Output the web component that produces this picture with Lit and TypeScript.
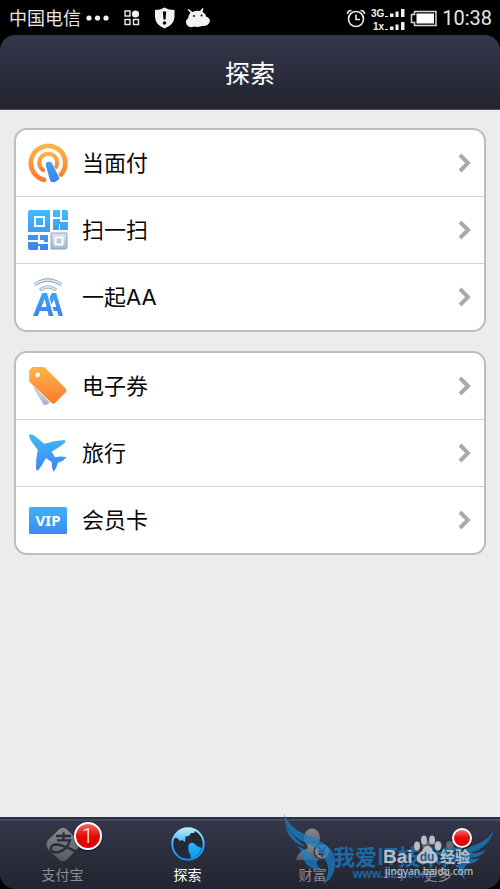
import { LitElement, html, css, svg } from "lit";
import { customElement, property } from "lit/decorators.js";

const CJK = css`"Noto Sans CJK SC", "Noto Sans", sans-serif`;

const gradients = svg`
  <linearGradient id="orange" x1="0" y1="0" x2="0" y2="1"><stop offset="0" stop-color="#ffb547"/><stop offset="1" stop-color="#f97a2e"/></linearGradient>
  <linearGradient id="blue" gradientUnits="userSpaceOnUse" x1="0" y1="0" x2="0" y2="40"><stop offset="0" stop-color="#3ebdf8"/><stop offset="1" stop-color="#3e82ee"/></linearGradient>
  <linearGradient id="steel" x1="0" y1="0" x2="0" y2="1"><stop offset="0" stop-color="#dce6f0"/><stop offset="1" stop-color="#a3b6cc"/></linearGradient>`;

const rowIcons: Record<string, unknown> = {
  touch: svg`
    <path d="M16 36.8A17.2 17.2 0 1 1 33 31.5" fill="none" stroke="url(#orange)" stroke-width="4.8" stroke-linecap="round"/>
    <path d="M15.2 27.2A9 9 0 1 1 28.2 23.8" fill="none" stroke="url(#orange)" stroke-width="4" stroke-linecap="round"/>
    <path d="M17.8 22.5Q17.4 19 21 18.8Q23.6 18.9 24.4 21L31.2 34.6Q31.4 37 28.2 38.4Q24.4 40 22.4 38.2Z" fill="url(#blue)" stroke="#fff" stroke-width="1" paint-order="stroke"/>`,
  scan: svg`
    <path fill="url(#blue)" fill-rule="evenodd" d="M2 0H22V22H0V2Q0 0 2 0ZM6 6V17H17V6Z"/>
    <path fill="url(#blue)" d="M8 8H15V15H8ZM25 0H32V7H25ZM34 0H38Q40 0 40 2V10H34ZM25 9H32V12H40V20H32V14H31V20H25ZM0 25H10V30H0ZM12 25H20V32H16V30H12ZM0 32H10V34H20V40H12V36H10V40H2Q0 40 0 38Z"/>
    <path d="M23 23H39V37Q39 39 37 39H23Z" fill="url(#steel)" stroke="#8ea2b8"/>
    <path d="M27.500 27.500H34.500V34.500H27.500Z" fill="#bac9d9" stroke="#fff" stroke-width="2"/>`,
  together: svg`
    <g fill="none" stroke-linecap="round">
      <path d="M8 7Q20 -1 32 7M13 12.4Q20 7.4 27 12.4" stroke="#8ea5be" stroke-width="3.2"/>
      <path d="M8 7Q20 -1 32 7M13 12.4Q20 7.4 27 12.4" stroke="#e4ecf3" stroke-width="1.7"/>
    </g>
    <path fill="url(#blue)" fill-rule="evenodd" d="M14.2 16H19L25.4 39H20.8L19.4 34H11.8L9.8 39H5ZM16.8 22L13.4 30H18.5Z"/>
    <path fill="url(#blue)" d="M23.6 16H28.2L35 39H30.6L29.2 34H25.8L24.6 30H28.2L26 22.500L23.4 27.500L21.6 21Z"/>`,
  tag: svg`
    <path d="M6 21.5L21.3 36.6Q19 39 16 38.6Z" fill="url(#steel)" stroke="#93a7be" stroke-width=".7"/>
    <path d="M4.5 1H15Q16.5 1 17.5 2L38 22.8Q39.4 24.4 38 26L27 37Q25.4 38.4 23.6 37L2.2 16.5Q1.2 15.5 1.2 14V4.5Z" fill="url(#orange)"/>
    <circle cx="9.7" cy="8.7" r="2.8" fill="#fff" stroke="#e98b32" stroke-width=".7"/>`,
  plane: svg`
    <path fill="url(#blue)" d="M1.3 1.3Q4 .8 6.5 2.8L16.2 10.8Q26 7.5 36.4 7L37.6 9Q31 15 23.6 18.7L27 24.2Q33 22.8 38.8 24.3Q35 28.4 29.8 29.8Q29 34.8 25.4 38.8Q23.4 34.2 23.8 29.2L18 25Q14.5 32 9.8 37.7L8 36.2Q7.6 26 9.8 17L2.6 7.2Q1 4 1.3 1.3Z"/>`,
  vip: svg`
    <rect x="1" y="7" width="38" height="27" rx="1.5" fill="url(#blue)"/>
    <text x="20" y="26" text-anchor="middle" fill="#fff" font-family="Noto Sans, sans-serif" font-weight="700" font-size="15">VIP</text>`,
};

const tabIcons: Record<string, unknown> = {
  alipay: svg`
    <path d="M13 2.5Q17 -1 21 2.5L32 13Q35 17 32 21L21 32.5Q17 36 13 32.5L2 22Q-1 17 2 13Z" fill="url(#dim)"/>
    <path d="M10 9H25M17.5 5.5V13M11 13.4H24Q21 23 13 25Q6 26.5 4.8 22Q4.6 17.5 11 17.5Q18 18.5 31 25" fill="none" stroke="#2b2d3a" stroke-width="2.4"/>`,
  globe: svg`
    <circle cx="17" cy="17" r="15.7" fill="#252936" stroke="url(#sky)" stroke-width="2"/>
    <path fill="url(#sky)" d="M3 11Q8 1 18 1.4Q22 1.6 24 4L23 6L20 6L18 9L14.5 9.500L14 15L11 13L9 14L6 11Z"/>
    <path fill="url(#sky)" d="M17.5 18Q19 15 23 16.2L26 19L30.6 21Q28.5 28.5 21 31.8Q18.5 30.6 19.5 27.5Q16.5 25 17.5 18Z"/>`,
  wealth: svg`
    <ellipse cx="16" cy="11" rx="8" ry="9.5" fill="url(#dim)"/>
    <path d="M11.5 17H20.5V21Q29 23 31 33H0Q1 25 11.5 21.5Z" fill="url(#dim)"/>
    <circle cx="26" cy="24.5" r="8.500" fill="#303443"/><circle cx="26" cy="24.5" r="7" fill="#858790"/>
    <path d="M22.5 20L26 24L29.5 20M26 24V30M22.5 24.5H29.5M22.5 27.2H29.5" fill="none" stroke="#2b2e3a" stroke-width="1.7"/>`,
  more: svg`
    <circle cx="5" cy="18" r="4" fill="#656873"/><circle cx="17" cy="18" r="4" fill="#656873"/><circle cx="29" cy="18" r="4" fill="#656873"/>`,
};

@customElement("menu-row")
class MenuRow extends LitElement {
  @property() icon = "";
  @property() label = "";
  static styles = css`
    :host { display: block; }
    .row { display: flex; align-items: center; box-sizing: border-box; width: 100%; height: 66px; padding: 0 13px 0 12px; border: 0; background: none; color: #080808; font: 22px/32px Inter, ${CJK}; text-align: left; }
    .icon { width: 40px; height: 40px; margin-right: 14px; flex: none; }
    .label { flex: 1; }
    .chevron { width: 13px; height: 20px; flex: none; }
  `;
  render() {
    return html`<button class="row">
      <svg class="icon" viewBox="0 0 40 40" aria-hidden="true"><defs>${gradients}</defs>${rowIcons[this.icon]}</svg>
      <span class="label">${this.label}</span>
      <svg class="chevron" viewBox="0 0 13 20" aria-hidden="true"><path d="M2 2L10 10L2 18" fill="none" stroke="#a9aaac" stroke-width="4"/></svg>
    </button>`;
  }
}

@customElement("tab-item")
class TabItem extends LitElement {
  @property() icon = "";
  @property() label = "";
  @property() badge = "";
  @property({ type: Boolean }) dot = false;
  @property({ type: Boolean }) active = false;
  static styles = css`
    :host { display: block; flex: 1; }
    .tab { position: relative; display: flex; flex-direction: column; align-items: center; width: 100%; padding: 8px 0 4px; border: 0; background: none; color: #8b8c93; font: 14px/20px ${CJK}; }
    .active { color: #fff; }
    .icon { width: 34px; height: 36px; margin-bottom: 1px; }
    .badge { position: absolute; box-sizing: border-box; border: 2px solid #fff; border-radius: 50%; background: linear-gradient(#f46a68, #e80808 50%, #df0000); color: #fff; box-shadow: 0 1px 2px #0008; }
    .count { left: calc(50% + 11px); top: 9px; width: 28px; height: 28px; margin-top: -6px; font: 300 20px/24px Roboto, sans-serif; text-align: center; }
    .dot { left: calc(50% + 14px); top: 9px; width: 20px; height: 20px; }
  `;
  render() {
    return html`<button class="tab ${this.active ? "active" : ""}">
      <svg class="icon" viewBox="0 0 34 36" aria-hidden="true">
        <defs>
          <linearGradient id="dim" x1="0" y1="0" x2="0" y2="1"><stop offset="0" stop-color="#898a90"/><stop offset="1" stop-color="#565863"/></linearGradient>
          <linearGradient id="sky" gradientUnits="userSpaceOnUse" x1="0" y1="0" x2="0" y2="34"><stop offset="0" stop-color="#c8f0ff"/><stop offset=".55" stop-color="#22aef8"/><stop offset="1" stop-color="#0a91ed"/></linearGradient>
        </defs>${tabIcons[this.icon]}</svg>
      <span>${this.label}</span>
      ${this.badge ? html`<span class="badge count">${this.badge}</span>` : ""}
      ${this.dot ? html`<span class="badge dot"></span>` : ""}
    </button>`;
  }
}

@customElement("app-root")
class AppRoot extends LitElement {
  static styles = css`
    :host { display: flex; flex-direction: column; min-height: 100vh; background: #000; font-family: ${CJK}; }
    .status { display: flex; align-items: center; height: 35px; padding: 0 8px 0 9px; color: #e6e6e6; font-size: 18px; line-height: 32px; }
    .carrier { padding-bottom: 2px; }
    .notices { width: 126px; height: 24px; margin-left: 4px; }
    .signals { width: 94px; height: 28px; margin-left: auto; }
    .time { margin-left: 3px; font: 20px/36px Roboto, sans-serif; }
    .title { box-sizing: border-box; height: 75px; margin: 0; border-bottom: 1px solid #55565d; border-radius: 15px 15px 0 0; background: linear-gradient(#34374b, #23242f); color: #fff; font-size: 25px; font-weight: 400; line-height: 75px; text-align: center; }
    .content { flex: 1; display: flex; flex-direction: column; gap: 19px; padding: 18px 14px; background: #ebecee; }
    .card { border: 2px solid #bcbdc0; border-radius: 13px; background: #fff; overflow: hidden; }
    .card menu-row + menu-row { border-top: 1px solid #d4d5d7; }
    .tabs { position: relative; display: flex; box-sizing: border-box; height: 72px; border-top: 2px solid #2a313c; box-shadow: inset 0 2px #454a60; background: linear-gradient(#34374b, #23242f); border-radius: 0 0 15px 15px; }
    .bottom { background: #000; }
    .marks { position: absolute; right: 0; bottom: 0; width: 225px; height: 84px; pointer-events: none; }
  `;
  render() {
    return html`
      <div class="status">
        <span class="carrier">中国电信</span>
        <svg class="notices" viewBox="0 0 126 24" aria-hidden="true">
          <g fill="#f2f2f2">
            <circle cx="4" cy="12" r="2.6"/><circle cx="12.5" cy="12" r="2.6"/><circle cx="21" cy="12" r="2.6"/>
            <circle cx="50.5" cy="8" r="3.6"/>
            <path d="M70 4Q75.5 4 79.5 1.5Q83.5 4 89.5 4V11Q89 19 79.5 22.5Q70.500 19 70 11Z"/>
            <path d="M103.500 3L107.500 6Q111 4 115 5L117.500 2L118.500 2.600L117.500 6Q121 8 121 10.500Q126 12 124.500 16.500Q122.500 20.500 117 20Q112 21.500 109.500 20.500Q104 22.500 101.500 18.500Q100 14 103 12.500Q103 9 105.500 7L102.500 3.600Z"/>
          </g>
          <g fill="none" stroke="#e8e8e8" stroke-width="1.4"><path d="M40 5H45V10H40ZM40 13.5H45V18.5H40ZM48.500 13.5H53.5V18.5H48.500Z"/></g>
          <path d="M77.8 5.5H81.2L80.5 13.5H78.500Z" fill="#000"/><circle cx="79.5" cy="17" r="1.8" fill="#000"/>
          <circle cx="109" cy="10" r="1" fill="#000"/><circle cx="116.5" cy="9.5" r="1" fill="#000"/>
        </svg>
        <svg class="signals" viewBox="0 0 94 28" aria-hidden="true">
          <g fill="none" stroke="#e4e4e4" stroke-width="1.7">
            <circle cx="11" cy="15" r="7.5"/><path d="M11 10.5V15.5H15M2.500 10Q2.500 6.5 6.5 6.5M15.5 6.5Q19.5 6.5 19.5 10"/>
          </g>
          <g fill="#f0f0f0">
            <path d="M40 12H43V13H40ZM45 9.5H48.5V13H45ZM50.500 7.500H53.5V13H50.500ZM56 5H59.5V13H56ZM40 25H43V26H40ZM45 22.5H48.5V26H45ZM50.500 20.500H53.5V26H50.500ZM56 18H59.5V26H56Z"/>
            <text x="26" y="13" font-family="Liberation Sans, sans-serif" font-weight="700" font-size="10">3G</text>
            <text x="28" y="26" font-family="Liberation Sans, sans-serif" font-weight="700" font-size="10">1x</text>
          </g>
          <path d="M69.5 7.500H91V21.500H69.5V18.500H66.500V10.500H69.5Z" fill="none" stroke="#d8d8d8" stroke-width="1.5"/>
          <path d="M71.500 9.500H89V19.500H71.500Z" fill="#fff"/>
        </svg>
        <span class="time">10:38</span>
      </div>
      <h1 class="title">探索</h1>
      <main class="content">
        <section class="card">
          <menu-row icon="touch" label="当面付"></menu-row>
          <menu-row icon="scan" label="扫一扫"></menu-row>
          <menu-row icon="together" label="一起AA"></menu-row>
        </section>
        <section class="card">
          <menu-row icon="tag" label="电子券"></menu-row>
          <menu-row icon="plane" label="旅行"></menu-row>
          <menu-row icon="vip" label="会员卡"></menu-row>
        </section>
      </main>
      <div class="bottom">
        <nav class="tabs">
          <tab-item icon="alipay" label="支付宝" badge="1"></tab-item>
          <tab-item icon="globe" label="探索" active></tab-item>
          <tab-item icon="wealth" label="财富"></tab-item>
          <tab-item icon="more" label="更多" dot></tab-item>
          <svg class="marks" viewBox="0 0 225 84">
            <g fill="#1684cf" opacity=".7">
              <path d="M9 9Q14 22 29 29Q59 39 60 55Q61 73 48 79Q56 68 52 58Q47 43 27 36Q10 27 9 9ZM10 19Q16 31 31 42Q14 38 10 19ZM22 41Q34 45 38 53L44 54Q38 59 48 66Q30 63 29 54Q28 47 22 41Z"/>
              <path d="M219 24Q215 35 197 41Q186 45 184 53Q181 67 190 75Q186 64 192 59Q200 59 205 53Q199 55 194 53Q207 52 211 45Q203 49 196 48Q215 42 219 24Z"/>
              <text x="58" y="60" font-family="Noto Sans CJK SC, sans-serif" font-weight="700" font-size="22">我爱IT技术网</text>
              <text x="78" y="73" font-family="Liberation Sans, sans-serif" font-weight="700" font-size="12">www.52ij.com</text>
            </g>
            <g fill="#c9cbd2" opacity=".9">
              <ellipse cx="142" cy="41" rx="3" ry="4.5"/><ellipse cx="149" cy="35" rx="3" ry="4.5"/><ellipse cx="157" cy="35" rx="3" ry="4.5"/><ellipse cx="163" cy="41" rx="3" ry="4.5"/>
              <path d="M152.5 41Q156 41 158 46Q164 50 162.5 55Q160 60 152.5 58Q145 60 142 56Q140.5 50 147 46Q149 41 152.5 41Z"/>
              <text x="108" y="58" font-family="Liberation Sans, sans-serif" font-weight="700" font-size="19">Bai</text>
              <text x="165" y="57" font-family="Noto Sans CJK SC, sans-serif" font-weight="700" font-size="15">经验</text>
              <text x="110" y="70" font-family="Noto Sans, sans-serif" font-weight="500" font-size="10">jingyan.baidu.com</text>
            </g>
            <text x="152" y="56" text-anchor="middle" fill="#1f5c8c" font-family="Liberation Sans, sans-serif" font-weight="700" font-size="12">du</text>
          </svg>
        </nav>
      </div>`;
  }
}
